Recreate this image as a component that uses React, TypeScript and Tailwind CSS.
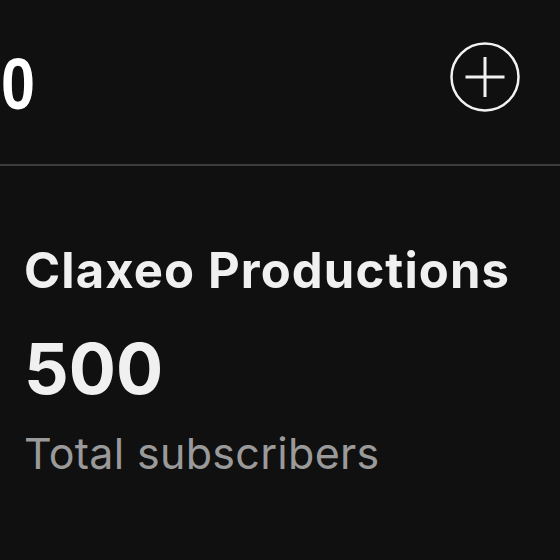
export default function App() {
  return (
    <div className="w-[560px] h-[560px] overflow-hidden bg-[#101010] font-['Inter',sans-serif]">
      <div className="h-[164px] flex items-center justify-between">
        <div className="ml-[1px] mt-[3px] text-white text-[72px] font-bold leading-none scale-x-[0.85] origin-left font-['Liberation_Sans',sans-serif]">
          0
        </div>
        <div className="mr-[40px] mt-[-10px]">
          <svg width="70" height="70" viewBox="0 0 70 70" fill="none" stroke="#f2f2f2" strokeWidth="2.5">
            <circle cx="35" cy="35" r="33.5" />
            <path d="M35 15v40M15.5 35h39" strokeWidth="3" />
          </svg>
        </div>
      </div>
      <div className="h-[2px] bg-[#3c3c3c]" />
      <div className="px-[24px] pt-[80px] flex flex-col">
        <div className="text-[#f0f0f0] text-[49px] font-bold leading-none tracking-[1.1px] whitespace-nowrap">Claxeo Productions</div>
        <div className="mt-[39px] text-[#f0f0f0] text-[70px] font-bold leading-none">500</div>
        <div className="mt-[28px] text-[#9a9a9a] text-[43px] leading-none tracking-[0.3px] whitespace-nowrap">Total subscribers</div>
      </div>
    </div>
  )
}
